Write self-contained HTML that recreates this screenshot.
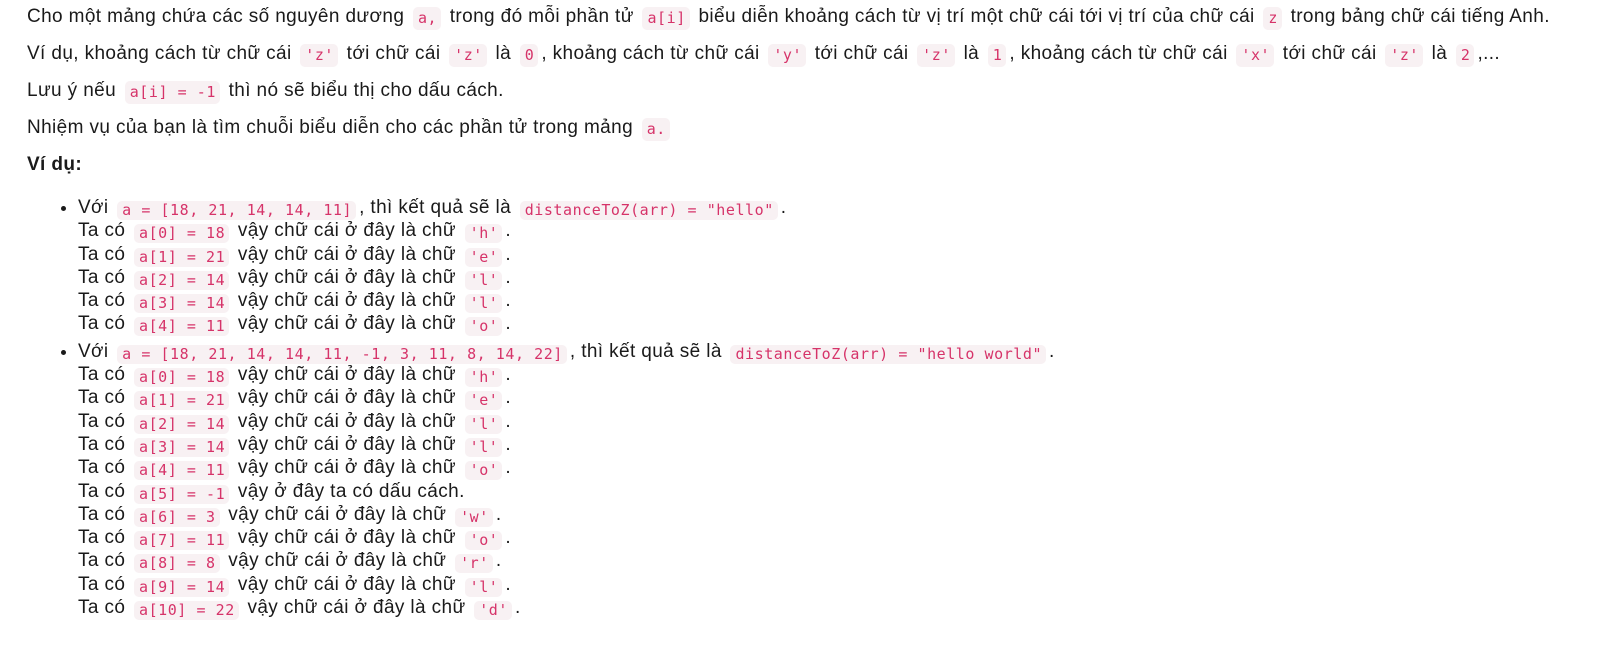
<!DOCTYPE html>
<html><head><meta charset="utf-8"><style>
body{margin:0;background:#fff;font-family:"Liberation Sans",sans-serif;font-size:19px;letter-spacing:0.38px;color:#1a1a1a;}
.w{padding:5px 0 0 27px;width:1580px}
p{margin:0 0 13px 0;height:24px;line-height:24px;white-space:nowrap}
code{font-family:"DejaVu Sans Mono","Liberation Mono",monospace;font-size:15px;letter-spacing:0.55px;line-height:15px;color:#d63369;background:#f8f1f3;padding:4px 4px 4px 5px;border-radius:5px;margin:0 3px;display:inline-block}
ul{margin:0;padding:6px 0 0 51px}
li{line-height:23.3px;margin-bottom:4px;white-space:nowrap}
li code{padding:2px 4px 2px 5px;vertical-align:-2px}
.l{display:block;height:23.3px;line-height:23.3px}
p code{vertical-align:-1px}
b{font-weight:bold}
</style></head><body><div class="w">
<p>Cho một mảng chứa các số nguyên dương <code>a,</code> trong đó mỗi phần tử <code>a[i]</code> biểu diễn khoảng cách từ vị trí một chữ cái tới vị trí của chữ cái <code>z</code> trong bảng chữ cái tiếng Anh.</p>
<p>Ví dụ, khoảng cách từ chữ cái <code>'z'</code> tới chữ cái <code>'z'</code> là <code>0</code>, khoảng cách từ chữ cái <code>'y'</code> tới chữ cái <code>'z'</code> là <code>1</code>, khoảng cách từ chữ cái <code>'x'</code> tới chữ cái <code>'z'</code> là <code>2</code>,...</p>
<p>Lưu ý nếu <code>a[i] = -1</code> thì nó sẽ biểu thị cho dấu cách.</p>
<p>Nhiệm vụ của bạn là tìm chuỗi biểu diễn cho các phần tử trong mảng <code>a.</code></p>
<p><b>Ví dụ:</b></p>
<ul>
<li><span class="l">Với <code>a = [18, 21, 14, 14, 11]</code>, thì kết quả sẽ là <code>distanceToZ(arr) = "hello"</code>.</span>
<span class="l">Ta có <code>a[0] = 18</code> vậy chữ cái ở đây là chữ <code>'h'</code>.</span>
<span class="l">Ta có <code>a[1] = 21</code> vậy chữ cái ở đây là chữ <code>'e'</code>.</span>
<span class="l">Ta có <code>a[2] = 14</code> vậy chữ cái ở đây là chữ <code>'l'</code>.</span>
<span class="l">Ta có <code>a[3] = 14</code> vậy chữ cái ở đây là chữ <code>'l'</code>.</span>
<span class="l">Ta có <code>a[4] = 11</code> vậy chữ cái ở đây là chữ <code>'o'</code>.</span></li>
<li><span class="l">Với <code>a = [18, 21, 14, 14, 11, -1, 3, 11, 8, 14, 22]</code>, thì kết quả sẽ là <code>distanceToZ(arr) = "hello world"</code>.</span>
<span class="l">Ta có <code>a[0] = 18</code> vậy chữ cái ở đây là chữ <code>'h'</code>.</span>
<span class="l">Ta có <code>a[1] = 21</code> vậy chữ cái ở đây là chữ <code>'e'</code>.</span>
<span class="l">Ta có <code>a[2] = 14</code> vậy chữ cái ở đây là chữ <code>'l'</code>.</span>
<span class="l">Ta có <code>a[3] = 14</code> vậy chữ cái ở đây là chữ <code>'l'</code>.</span>
<span class="l">Ta có <code>a[4] = 11</code> vậy chữ cái ở đây là chữ <code>'o'</code>.</span>
<span class="l">Ta có <code>a[5] = -1</code> vậy ở đây ta có dấu cách.</span>
<span class="l">Ta có <code>a[6] = 3</code> vậy chữ cái ở đây là chữ <code>'w'</code>.</span>
<span class="l">Ta có <code>a[7] = 11</code> vậy chữ cái ở đây là chữ <code>'o'</code>.</span>
<span class="l">Ta có <code>a[8] = 8</code> vậy chữ cái ở đây là chữ <code>'r'</code>.</span>
<span class="l">Ta có <code>a[9] = 14</code> vậy chữ cái ở đây là chữ <code>'l'</code>.</span>
<span class="l">Ta có <code>a[10] = 22</code> vậy chữ cái ở đây là chữ <code>'d'</code>.</span></li>
</ul>
</div></body></html>
